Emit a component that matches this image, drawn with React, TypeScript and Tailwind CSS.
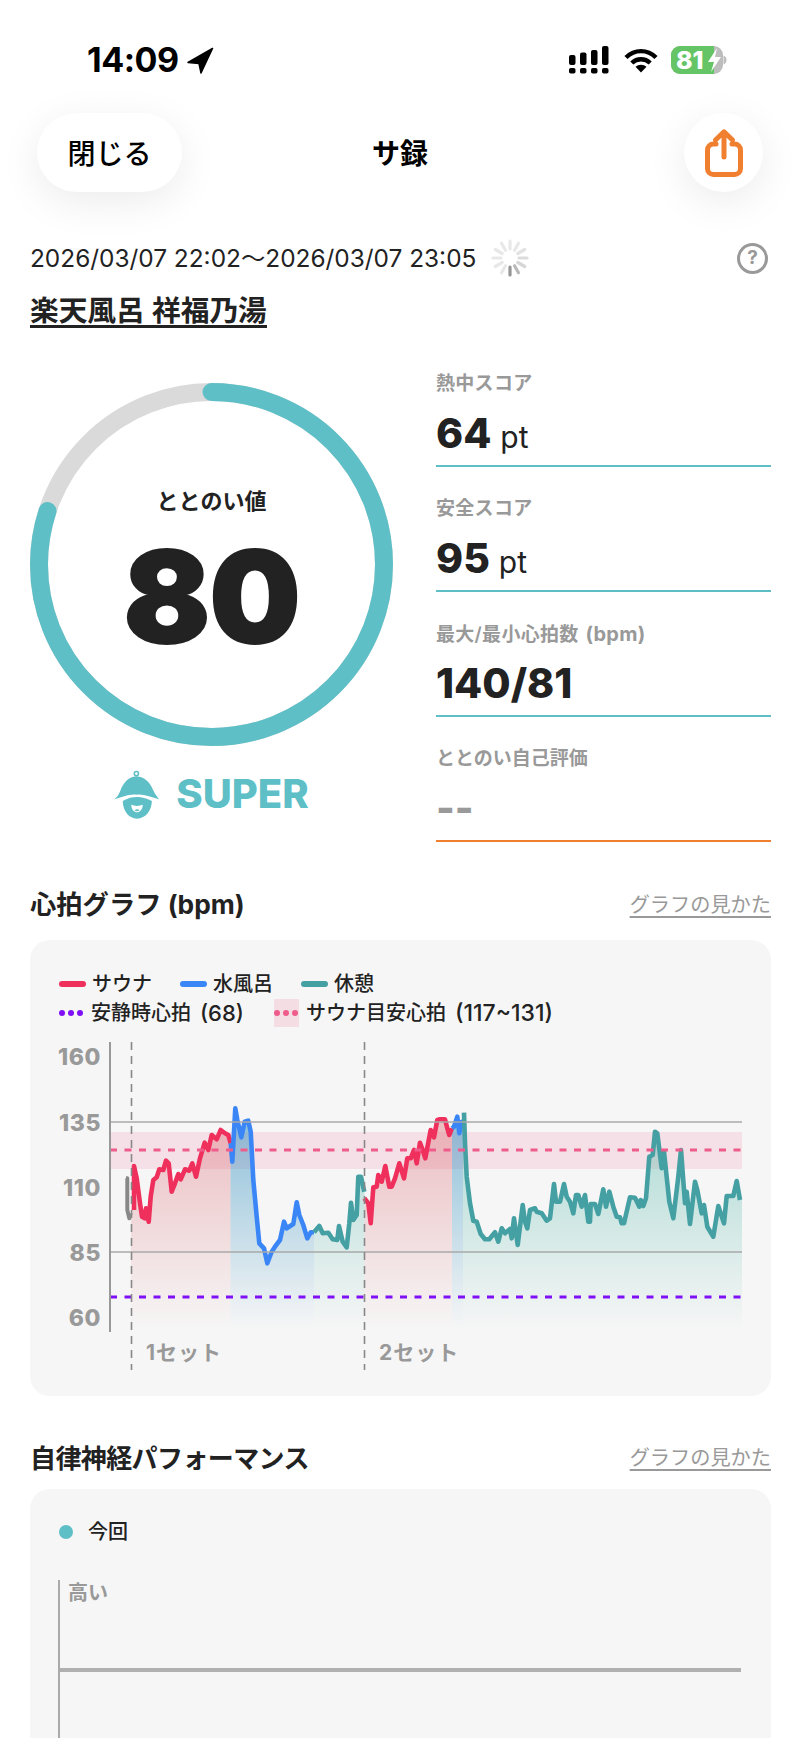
type Pt = [number, number];

// 拡大図から読み取った座標をページ座標へ変換する
const shift = (x0: number, pts: Pt[]): Pt[] =>
  pts.map(([x, y]) => [x0 + x / 3, 1100 + y / 3] as Pt);

const grey = shift(120, [[18, 235], [22, 235], [22, 330], [28, 355], [32, 340]]);
const red1 = shift(120, [
  [42, 330], [42, 198], [50, 235], [60, 310], [66, 350], [74, 355], [78, 325], [86, 365], [92, 290],
  [100, 240], [110, 232], [118, 208], [130, 210], [138, 182], [146, 190], [155, 275], [165, 250],
  [175, 222], [182, 238], [195, 208], [208, 212], [217, 190], [228, 230], [240, 175], [254, 128],
  [265, 150], [275, 105], [290, 118], [302, 90], [315, 100], [325, 105], [332, 130],
]);
const blue1 = [
  ...shift(120, [
    [332, 130], [337, 185], [346, 25], [352, 60], [364, 112], [374, 65], [385, 62], [392, 95],
    [400, 240], [410, 350], [418, 430], [432, 445], [442, 490], [455, 455], [465, 440],
  ]),
  ...shift(280, [
    [0, 420], [12, 365], [20, 385], [40, 372], [50, 307], [58, 345], [70, 375], [82, 415], [92, 397], [102, 397],
  ]),
];
const teal1 = shift(280, [
  [102, 397], [118, 378], [128, 400], [145, 398], [158, 418], [172, 420], [177, 378], [188, 425],
  [200, 442], [208, 370], [213, 308], [220, 360], [230, 345], [235, 230], [243, 230], [253, 275],
]);
const red2 = [
  ...shift(280, [
    [253, 295], [265, 310], [272, 370], [280, 262], [290, 260], [295, 225], [305, 245], [316, 198],
    [328, 260], [335, 260], [345, 235], [358, 190], [372, 235], [382, 175], [392, 175], [402, 150],
    [410, 190], [420, 128], [428, 150], [436, 175], [452, 90], [462, 112], [472, 60],
  ]),
  ...shift(440, [[0, 58], [15, 58], [22, 85], [28, 105], [36, 85]]),
];
const blue2 = shift(440, [[36, 85], [42, 80], [52, 50], [58, 100], [65, 65], [72, 65]]);
const teal2 = [
  ...shift(440, [
    [72, 38], [75, 130], [80, 230], [90, 310], [100, 362], [110, 365], [122, 402], [135, 418],
    [148, 418], [165, 397], [175, 425], [185, 385], [195, 400], [210, 387], [215, 415], [222, 355],
    [233, 435], [248, 315], [255, 365], [262, 385], [270, 330], [285, 325], [290, 335], [305, 340],
    [320, 362], [330, 355], [342, 252], [348, 305], [360, 305], [372, 252], [380, 290], [390, 305],
    [400, 340], [408, 285], [415, 285], [425, 320], [435, 285], [445, 365],
  ]),
  ...shift(590, [
    [0, 365], [2, 312], [15, 312], [25, 342], [40, 268], [48, 320], [58, 275], [70, 320], [80, 350],
    [90, 352], [95, 370], [102, 370], [120, 292], [135, 293], [148, 320], [152, 300], [160, 318],
    [168, 295], [178, 170], [188, 165], [195, 95], [202, 100], [215, 205], [222, 155], [238, 305],
    [250, 355], [265, 230], [273, 150], [285, 310], [290, 275], [300, 372], [315, 245], [322, 270],
    [335, 340], [342, 315], [352, 380], [370, 410], [385, 318], [402, 370], [410, 288], [430, 288],
    [440, 243], [450, 300],
  ]),
];

const line = (pts: Pt[]) => pts.map(([x, y]) => `${x.toFixed(1)},${y.toFixed(1)}`).join(" ");
const area = (pts: Pt[], from: number, to: number) =>
  `${from},${pts[0][1].toFixed(1)} ${line(pts)} ${to},${pts[pts.length - 1][1].toFixed(1)} ${to},1330 ${from},1330`;

const SEGMENTS = [
  { pts: red1, color: "#F0305C", fill: "url(#fillRed)", from: 131, to: 230.5 },
  { pts: blue1, color: "#3B86F7", fill: "url(#fillBlue)", from: 230.5, to: 314 },
  { pts: teal1, color: "#45A0A3", fill: "url(#fillTeal)", from: 314, to: 364.5 },
  { pts: red2, color: "#F0305C", fill: "url(#fillRed)", from: 364.5, to: 452 },
  { pts: blue2, color: "#3B86F7", fill: "url(#fillBlue)", from: 452, to: 463 },
  { pts: teal2, color: "#45A0A3", fill: "url(#fillTeal)", from: 463, to: 742 },
];

const Y_LABELS = [
  { label: "160", y: 1057 },
  { label: "135", y: 1123 },
  { label: "110", y: 1188 },
  { label: "85", y: 1253 },
  { label: "60", y: 1318 },
];

const STATS = [
  { label: "熱中スコア", value: "64", unit: "pt" },
  { label: "安全スコア", value: "95", unit: "pt" },
  { label: "最大/最小心拍数", suffix: "(bpm)", value: "140/81" },
];

const SPOKES = [0.2, 0.2, 0.25, 0.3, 0.35, 0.6, 0.9, 0.2, 0.2, 0.2, 0.2, 0.2];

const Signal = () => (
  <svg width="42" height="28" viewBox="0 0 42 28" fill="#000">
    {[0, 11, 22, 33].map((x, i) => (
      <g key={x}>
        <rect x={x} y={22} width="6.5" height="5.5" rx="1.8" />
        <rect x={x} y={[9, 6.5, 4, 0][i]} width="6.5" height={[10, 12.5, 15, 19][i]} rx="2" />
      </g>
    ))}
  </svg>
);

const Wifi = () => (
  <svg width="34" height="25" viewBox="0 0 34 25" fill="none" stroke="#000" strokeWidth="4.4">
    <path d="M2 9.5C10.5 1 23.5 1 32 9.5" />
    <path d="M7.8 15C13 10 21 10 26.2 15" />
    <path d="M17 24.5L11.5 18.8C14.5 16 19.5 16 22.5 18.8Z" fill="#000" stroke="none" />
  </svg>
);

const Battery = () => (
  <svg width="56" height="28" viewBox="0 0 56 28">
    <rect x="0" y="0" width="52" height="28" rx="9" fill="#BDBDBD" />
    <path d="M9 0H43V28H9A9 9 0 0 1 0 19V9A9 9 0 0 1 9 0Z" fill="#64C466" />
    <path d="M52.5 9.5C54.5 10 55.5 12 55.5 14C55.5 16 54.5 18 52.5 18.5Z" fill="#BDBDBD" />
    <text x="5" y="23" fontSize="25" fontWeight="800" fill="#fff" fontFamily="Inter, sans-serif">81</text>
    <path d="M46 2L37 16H43L40 26L50 11H44Z" fill="#fff" />
  </svg>
);

const ShareIcon = () => (
  <svg width="38" height="48" viewBox="0 0 38 48" fill="none" stroke="#F08030" strokeWidth="5" strokeLinecap="round" strokeLinejoin="round">
    <path d="M11 15H8.5A6 6 0 0 0 2.5 21V39.5A6 6 0 0 0 8.5 45.5H29.5A6 6 0 0 0 35.5 39.5V21A6 6 0 0 0 29.5 15H27" />
    <path d="M19 28V3M10.5 11L19 2.8L27.5 11" />
  </svg>
);

const Bell = () => (
  <svg width="46" height="50" viewBox="22 18 150 165">
    <circle cx="95" cy="33" r="7" fill="none" stroke="#5EBFC7" strokeWidth="5" />
    <path d="M95 42C66 44 50 68 42 90C37 104 30 112 22 118C48 112 70 100 95 103C120 100 144 112 170 118C160 106 153 95 149 85C140 62 122 44 95 42Z" fill="#5EBFC7" />
    <path d="M50 124C66 113 82 110 97 110C115 110 132 116 146 124C146 154 126 182 97 182C68 182 50 154 50 124Z" fill="#5EBFC7" />
    <path d="M78 136C90 141 104 141 116 136C116 150 107 161 97 161C87 161 78 150 78 136Z" fill="#fff" />
    <path d="M89 154C94 150 100 150 105 154C101 159 93 159 89 154Z" fill="#5EBFC7" />
  </svg>
);

const Dots = ({ color }: { color: string }) => (
  <div className="flex gap-[3px]">
    {[0, 1, 2].map((i) => (
      <div key={i} className="w-[6px] h-[6px] rounded-full" style={{ backgroundColor: color }} />
    ))}
  </div>
);

const HeartChart = () => (
  <svg width="700" height="335" viewBox="50 1040 700 335" className="block ml-[20px]">
    <defs>
      <linearGradient id="fillRed" gradientUnits="userSpaceOnUse" x1="0" y1="1110" x2="0" y2="1330">
        <stop offset="0" stopColor="#D8505A" stopOpacity="0.36" />
        <stop offset="1" stopColor="#D8505A" stopOpacity="0" />
      </linearGradient>
      <linearGradient id="fillBlue" gradientUnits="userSpaceOnUse" x1="0" y1="1110" x2="0" y2="1330">
        <stop offset="0" stopColor="#2F8FC0" stopOpacity="0.55" />
        <stop offset="1" stopColor="#2F8FC0" stopOpacity="0" />
      </linearGradient>
      <linearGradient id="fillTeal" gradientUnits="userSpaceOnUse" x1="0" y1="1110" x2="0" y2="1330">
        <stop offset="0" stopColor="#40B0A0" stopOpacity="0.42" />
        <stop offset="1" stopColor="#40B0A0" stopOpacity="0" />
      </linearGradient>
    </defs>

    <rect x="110" y="1132" width="632" height="37" fill="#F0A0B8" fillOpacity="0.25" />

    {SEGMENTS.map((s) => (
      <polygon key={s.from} points={area(s.pts, s.from, s.to)} fill={s.fill} />
    ))}
    <polyline points={line(grey)} fill="none" stroke="#888888" strokeWidth="4" strokeLinejoin="round" />
    {SEGMENTS.map((s) => (
      <polyline key={s.from} points={line(s.pts)} fill="none" stroke={s.color} strokeWidth="4.6" strokeLinejoin="round" />
    ))}

    <line x1="111" y1="1122" x2="742" y2="1122" stroke="#A8A8A8" strokeWidth="1.5" />
    <line x1="111" y1="1252" x2="742" y2="1252" stroke="#A8A8A8" strokeWidth="1.5" />
    <line x1="110" y1="1150" x2="742" y2="1150" stroke="#EE5C8B" strokeWidth="2.8" strokeDasharray="7 7.5" />
    <line x1="110" y1="1297" x2="742" y2="1297" stroke="#7F10F5" strokeWidth="2.8" strokeDasharray="7 7.5" />
    <line x1="110" y1="1042" x2="110" y2="1332" stroke="#999999" strokeWidth="2" />
    <line x1="131.5" y1="1042" x2="131.5" y2="1370" stroke="#888888" strokeWidth="1.6" strokeDasharray="8 6" />
    <line x1="364.5" y1="1042" x2="364.5" y2="1370" stroke="#888888" strokeWidth="1.6" strokeDasharray="8 6" />

    {Y_LABELS.map((t) => (
      <text key={t.label} x="101" y={t.y + 8} textAnchor="end" fontSize="23" fontWeight="800" letterSpacing="0.6" fill="#999999" fontFamily="Inter, sans-serif">
        {t.label}
      </text>
    ))}
    <text x="146" y="1360" fontSize="21" fontWeight="700" letterSpacing="1" fill="#999999" fontFamily="Inter, 'Noto Sans CJK JP', sans-serif">1セット</text>
    <text x="379" y="1360" fontSize="21" fontWeight="700" letterSpacing="1" fill="#999999" fontFamily="Inter, 'Noto Sans CJK JP', sans-serif">2セット</text>
  </svg>
);

const App = () => {
  return (
    <div className="w-[800px] h-[1738px] overflow-hidden bg-white text-[#222222] font-['Inter','Noto_Sans_CJK_JP',sans-serif]">
      {/* ステータスバー */}
      <div className="flex items-center justify-between h-[30px] mt-[45px] pl-[87px] pr-[73px]">
        <div className="flex items-center gap-[8px]">
          <span className="text-[34px] leading-[30px] font-bold tracking-[-0.5px] text-black">14:09</span>
          <svg width="27" height="27" viewBox="0 0 27 27" fill="#000" stroke="#000" strokeWidth="1.5" strokeLinejoin="round">
            <path d="M25.5 1.5L1 15.5L12 16.5L14 26Z" />
          </svg>
        </div>
        <div className="flex items-center gap-[13px]">
          <Signal />
          <Wifi />
          <Battery />
        </div>
      </div>

      {/* ヘッダー */}
      <div className="grid grid-cols-3 items-center px-[37px] mt-[38px]">
        <button className="w-[145px] h-[79px] pt-[3px] rounded-[40px] bg-white shadow-[0_10px_40px_rgba(0,0,0,0.08)] text-[28px] font-medium text-black">
          閉じる
        </button>
        <h1 className="pt-[2px] text-center text-[28px] font-bold text-black">サ録</h1>
        <button className="justify-self-end w-[79px] h-[79px] rounded-full bg-white shadow-[0_10px_40px_rgba(0,0,0,0.08)] flex items-center justify-center">
          <ShareIcon />
        </button>
      </div>

      {/* 日時 */}
      <div className="flex items-center h-[36px] mt-[48px] pl-[30px] pr-[32px]">
        <span className="text-[24.4px] text-[#222222] whitespace-nowrap">2026/03/07 22:02～2026/03/07 23:05</span>
        <svg width="38" height="38" viewBox="-19 -19 38 38" className="ml-[15px]">
          {SPOKES.map((o, i) => (
            <line
              key={i}
              x1="0"
              y1="-9"
              x2="0"
              y2="-17"
              stroke="#8A8A8A"
              strokeOpacity={o}
              strokeWidth="3.2"
              strokeLinecap="round"
              transform={`rotate(${i * 30})`}
            />
          ))}
        </svg>
        <div className="ml-auto w-[31px] h-[31px] rounded-full border-[3px] border-[#999999] flex items-center justify-center text-[19px] font-bold text-[#999999]">
          ?
        </div>
      </div>
      <div className="h-[36px] mt-[18px] pl-[30px] flex items-start pt-[3px]">
        <span className="text-[28.7px] leading-[28px] font-semibold border-b-[3px] border-[#222222]">楽天風呂 祥福乃湯</span>
      </div>

      {/* スコア */}
      <div className="flex mt-[12px] pl-[30px] pr-[29px] h-[500px]">
        <div className="w-[363px] pt-[41px]">
          <div className="relative w-[363px] h-[363px] flex flex-col items-center">
            <svg width="363" height="363" viewBox="0 0 363 363" className="absolute inset-0">
              <circle cx="181.5" cy="181.5" r="172.5" fill="none" stroke="#DADADA" strokeWidth="18" />
              <circle
                cx="181.5"
                cy="181.5"
                r="172.5"
                fill="none"
                stroke="#5EBFC7"
                strokeWidth="18"
                strokeLinecap="round"
                strokeDasharray="867 1084"
                transform="rotate(-90 181.5 181.5)"
              />
            </svg>
            <div className="mt-[104px] h-[28px] text-[22px] leading-[28px] font-semibold">ととのい値</div>
            <div className="mt-[7px] text-[128px] leading-[150px] font-black tracking-[-1px] [-webkit-text-stroke:2px_#222222]">80</div>
          </div>
          <div className="flex items-center justify-center gap-[16px] mt-[24px] h-[48px]">
            <Bell />
            <span className="text-[40px] font-extrabold text-[#5EBFC7] leading-[48px]">SUPER</span>
          </div>
        </div>

        <div className="ml-[43px] flex-1">
          {STATS.map((s) => (
            <div key={s.label} className="h-[125px] flex flex-col justify-end pb-[12px] border-b-2 border-[#5EBFC7]">
              <div className="h-[26px] mt-[2px] mb-[16px] text-[19px] leading-[26px] font-semibold tracking-[0.3px] whitespace-nowrap text-[#999999]">
                {s.label}
                {s.suffix && <span className="ml-[7px] text-[20px] font-bold">{s.suffix}</span>}
              </div>
              <div className="h-[40px] leading-[40px] whitespace-nowrap">
                <span className="text-[41px] font-extrabold">{s.value}</span>
                {s.unit && <span className="text-[30px] ml-[9px]">{s.unit}</span>}
              </div>
            </div>
          ))}
          <div className="h-[125px] flex flex-col justify-end pb-[12px] border-b-2 border-[#F08030]">
            <div className="h-[26px] mt-[2px] mb-[16px] text-[19px] leading-[26px] font-semibold text-[#999999]">ととのい自己評価</div>
            <div className="h-[40px] leading-[40px] text-[40px] font-extrabold text-[#999999]">--</div>
          </div>
        </div>
      </div>

      {/* 心拍グラフ */}
      <div className="flex items-center justify-between h-[36px] mt-[45px] pr-[29px] pl-[30px]">
        <h2 className="text-[26.3px] font-bold">心拍グラフ (bpm)</h2>
        <a className="text-[20.2px] text-[#999999] underline underline-offset-4">グラフの見かた</a>
      </div>
      <div className="mt-[17px] ml-[30px] w-[741px] h-[456px] rounded-[20px] bg-[#F6F6F6] overflow-hidden pt-[31px]">
        <div className="flex items-center h-[26px] pl-[29px] text-[20px] font-medium">
          <div className="w-[27px] h-[6px] rounded-full bg-[#F0305C] mr-[6px]" />
          <span className="mr-[28px]">サウナ</span>
          <div className="w-[27px] h-[6px] rounded-full bg-[#3B86F7] mr-[6px]" />
          <span className="mr-[28px]">水風呂</span>
          <div className="w-[27px] h-[6px] rounded-full bg-[#45A0A3] mr-[6px]" />
          <span>休憩</span>
        </div>
        <div className="flex items-center h-[26px] mt-[3px] pl-[29px] text-[20px] font-medium">
          <Dots color="#7F10F5" />
          <span className="ml-[8px]">安静時心拍</span>
          <span className="ml-[9px] text-[22px]">(68)</span>
          <div className="relative ml-[30px] w-[25px] h-[28px] bg-[#F5DDE4] flex items-center justify-center">
            <Dots color="#EE5C8B" />
          </div>
          <span className="ml-[7px]">サウナ目安心拍</span>
          <span className="ml-[9px] text-[23px] whitespace-nowrap">(117~131)</span>
        </div>
        <div className="mt-[14px]">
          <HeartChart />
        </div>
      </div>

      {/* 自律神経パフォーマンス */}
      <div className="flex items-center justify-between h-[36px] mt-[44px] pl-[30px] pr-[29px]">
        <h2 className="text-[26px] font-bold tracking-[-0.6px]">自律神経パフォーマンス</h2>
        <a className="text-[20.2px] text-[#999999] underline underline-offset-4">グラフの見かた</a>
      </div>
      <div className="mt-[13px] ml-[30px] w-[741px] h-[300px] rounded-t-[20px] bg-[#F6F6F6] pt-[29px]">
        <div className="flex items-center h-[28px] pl-[29px]">
          <div className="w-[14px] h-[14px] rounded-full bg-[#5EBFC7]" />
          <span className="ml-[15px] text-[20px] font-medium">今回</span>
        </div>
        <div className="mt-[34px] ml-[28px] mr-[30px] h-[158px] border-l-2 border-[#AAAAAA]">
          <div className="pl-[8px] h-[26px] text-[20px] leading-[26px] font-bold text-[#999999]">高い</div>
          <div className="mt-[62px] h-[4px] bg-[#B0B0B0]" />
        </div>
      </div>
    </div>
  );
};

export default App;
